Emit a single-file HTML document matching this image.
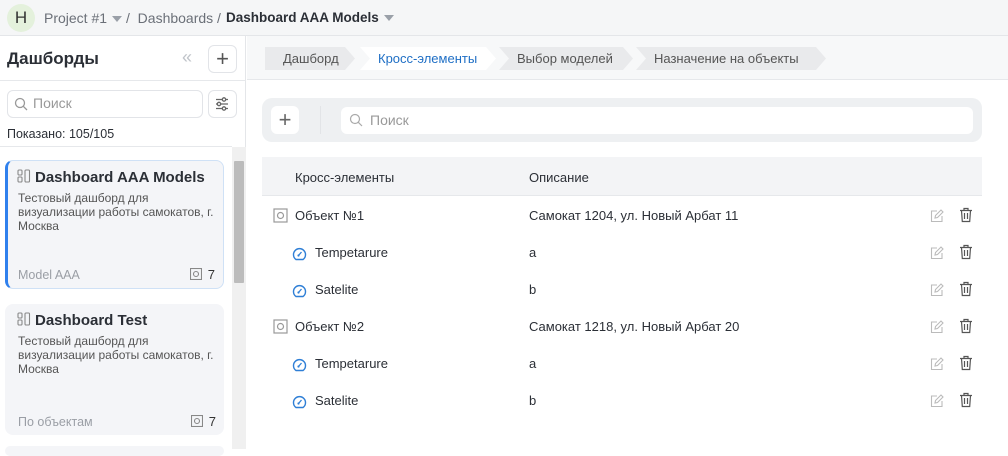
<!DOCTYPE html>
<html><head><meta charset="utf-8"><style>
*{box-sizing:border-box;margin:0;padding:0}
body{width:1008px;height:449px;overflow:hidden;font-family:"Liberation Sans","Noto Sans CJK SC",sans-serif;color:#2b2f36;background:#fff;position:relative;font-size:13px}
.abs{position:absolute}
.top{left:0;top:0;width:1008px;height:36px;background:#f5f6f7;border-bottom:1px solid #e4e6e9}
.av{left:7px;top:4px;width:28px;height:28px;border-radius:50%;background:#e4f1dc;text-align:center;line-height:28px;font-size:17px;color:#333}
.crumb{top:10px;font-size:14px;color:#6b7078}
.tri{display:inline-block;width:0;height:0;border-left:5px solid transparent;border-right:5px solid transparent;border-top:6px solid #9aa0a8;vertical-align:middle;margin-left:5px}
.left{left:0;top:36px;width:246px;height:413px;border-right:1px solid #e4e6e9;background:#fff}
.btn{background:#fff;border:1px solid #e2e4e8;border-radius:6px}
.card{left:5px;width:219px;border-radius:8px;background:#f4f5f8}
.card h3{position:absolute;left:9px;top:8px;font-size:15px;font-weight:bold;color:#2b2f36}
.card p{position:absolute;left:10px;top:30px;width:200px;font-size:12px;line-height:14px;color:#555}
.card .ft{position:absolute;left:10px;bottom:6px;font-size:12.5px;color:#9a9ea5}
.card .cnt{position:absolute;right:8px;bottom:6px;font-size:13px;color:#333}
.tab{top:47px;height:23px;line-height:23px;font-size:13px;color:#555;background:#e9eaec;clip-path:polygon(0 0,calc(100% - 10px) 0,100% 50%,calc(100% - 10px) 100%,0 100%,10px 50%);padding-left:18px}
.row{left:262px;width:720px;height:37px;font-size:13px;color:#2b2f36}
.row span{position:absolute;top:11px}
.ico{position:absolute;top:11px}
</style></head><body>
<div class="abs top"></div>
<div class="abs av">H</div>
<div class="abs crumb" style="left:44px">Project #1<span class="tri"></span></div>
<div class="abs crumb" style="left:126px">/&nbsp;&nbsp;Dashboards /</div>
<div class="abs crumb" style="left:226px;color:#2b2f36;font-weight:bold;font-size:13.5px">Dashboard AAA Models<span class="tri"></span></div>

<div class="abs left"></div>
<div class="abs" style="left:7px;top:49px;font-size:17px;font-weight:bold;color:#2b2f36">Дашборды</div>
<div class="abs" style="left:182px;top:47px;font-size:18px;color:#c0c4ca">«</div>
<div class="abs btn" style="left:208px;top:45px;width:29px;height:28px;text-align:center;line-height:25px;font-size:22px;color:#555">+</div>
<div class="abs" style="left:0;top:80px;width:246px;height:1px;background:#e6e8eb"></div>
<div class="abs btn" style="left:7px;top:90px;width:196px;height:28px"></div>
<svg class="abs" style="left:14px;top:97px" width="14" height="14"><circle cx="6" cy="6" r="4.5" fill="none" stroke="#999" stroke-width="1.3"/><path d="M9.3 9.3L13 13" stroke="#999" stroke-width="1.3"/></svg>
<div class="abs" style="left:33px;top:95px;font-size:14px;color:#999">Поиск</div>
<div class="abs btn" style="left:208px;top:90px;width:29px;height:28px"></div>
<svg class="abs" style="left:214px;top:96px" width="16" height="16" stroke="#666" stroke-width="1.3" fill="#fff"><path d="M2 3.5H14M2 8H14M2 12.5H14"/><circle cx="10" cy="3.5" r="1.7"/><circle cx="5" cy="8" r="1.7"/><circle cx="10" cy="12.5" r="1.7"/></svg>
<div class="abs" style="left:7px;top:127px;font-size:12.5px;color:#2b2f36">Показано: 105/105</div>
<div class="abs" style="left:0;top:146px;width:232px;height:1px;background:#e6e8eb"></div>
<div class="abs" style="left:232px;top:147px;width:14px;height:302px;background:#f0f0f0"></div>
<div class="abs" style="left:234px;top:161px;width:10px;height:122px;background:#bcbcbc;border-radius:1px"></div>

<div class="abs card" style="top:160px;height:129px;border:1px solid #cfe1f6;border-left:3px solid #2f80ed">
<h3><svg width="14" height="14" style="vertical-align:-1px;margin-right:4px" fill="none" stroke="#888" stroke-width="1.1"><rect x="1" y="1" width="4" height="5" rx="1"/><rect x="1" y="8" width="4" height="5" rx="1"/><rect x="8" y="1" width="4.5" height="12" rx="1"/></svg>Dashboard AAA Models</h3>
<p>Тестовый дашборд для визуализации работы самокатов, г. Москва</p>
<div class="ft">Model AAA</div><div class="cnt"><svg width="12" height="12" style="vertical-align:-1px;margin-right:6px" fill="none" stroke="#888" stroke-width="1.1"><rect x="0.5" y="0.5" width="11" height="11"/><circle cx="6" cy="6" r="2.5"/></svg>7</div></div>
<div class="abs card" style="top:304px;height:131px;border-left:3px solid transparent">
<h3><svg width="14" height="14" style="vertical-align:-1px;margin-right:4px" fill="none" stroke="#888" stroke-width="1.1"><rect x="1" y="1" width="4" height="5" rx="1"/><rect x="1" y="8" width="4" height="5" rx="1"/><rect x="8" y="1" width="4.5" height="12" rx="1"/></svg>Dashboard Test</h3>
<p>Тестовый дашборд для визуализации работы самокатов, г. Москва</p>
<div class="ft">По объектам</div><div class="cnt"><svg width="12" height="12" style="vertical-align:-1px;margin-right:6px" fill="none" stroke="#888" stroke-width="1.1"><rect x="0.5" y="0.5" width="11" height="11"/><circle cx="6" cy="6" r="2.5"/></svg>7</div></div>
<div class="abs card" style="top:446px;height:10px"></div>

<div class="abs" style="left:247px;top:36px;width:761px;height:44px;background:#f7f8f9;border-bottom:1px solid #e6e8eb"></div>
<div class="abs tab" style="left:265px;width:90px;clip-path:polygon(0 0,calc(100% - 10px) 0,100% 50%,calc(100% - 10px) 100%,0 100%)">Дашборд</div>
<div class="abs tab" style="left:360px;width:136px;background:#fff;color:#1f6fc5">Кросс-элементы</div>
<div class="abs tab" style="left:499px;width:134px">Выбор моделей</div>
<div class="abs tab" style="left:636px;width:190px">Назначение на объекты</div>

<div class="abs" style="left:262px;top:98px;width:720px;height:44px;background:#eef0f2;border-radius:10px"></div>
<div class="abs" style="left:271px;top:106px;width:28px;height:28px;background:#fff;border-radius:6px;text-align:center;line-height:28px;font-size:22px;color:#666">+</div>
<div class="abs" style="left:320px;top:106px;width:1px;height:28px;background:#e2e4e7"></div>
<div class="abs" style="left:341px;top:107px;width:632px;height:27px;background:#fff;border-radius:6px"></div>
<svg class="abs" style="left:349px;top:113px" width="14" height="14"><circle cx="6" cy="6" r="4.5" fill="none" stroke="#aaa" stroke-width="1.2"/><path d="M9.3 9.3L13 13" stroke="#aaa" stroke-width="1.2"/></svg>
<div class="abs" style="left:370px;top:112px;font-size:14px;color:#999">Поиск</div>

<div class="abs" style="left:262px;top:157px;width:720px;height:39px;background:#f3f4f6;border-bottom:1px solid #e6e8eb"></div>
<div class="abs" style="left:295px;top:170px;font-size:13px">Кросс-элементы</div>
<div class="abs" style="left:529px;top:170px;font-size:13px">Описание</div>

<div id="rows"></div>
<script>
var d=[["obj","Объект №1","Самокат 1204, ул. Новый Арбат 11"],["s","Tempetarure","a"],["s","Satelite","b"],["obj","Объект №2","Самокат 1218, ул. Новый Арбат 20"],["s","Tempetarure","a"],["s","Satelite","b"]];
var h="";
d.forEach(function(r,i){var y=197+i*37;var ic;
if(r[0]=="obj"){ic='<svg class="ico" style="left:11px" width="15" height="15"><rect x="1" y="1" width="13" height="13" fill="none" stroke="#999" stroke-width="1.2"/><circle cx="7.5" cy="7.5" r="3" fill="none" stroke="#999" stroke-width="1.2"/></svg>';var tx=33;}
else{ic='<svg class="ico" style="left:30px;top:12px" width="15" height="15"><path d="M4 13.5H11A6 6 0 1 0 4 13.5Z" fill="none" stroke="#2f7fd6" stroke-width="1.4" stroke-linejoin="round"/><path d="M6.5 9.5L9.5 6" stroke="#2f7fd6" stroke-width="1.3"/><circle cx="6.5" cy="9.5" r="1.1" fill="#2f7fd6"/></svg>';var tx=53;}
h+='<div class="abs row" style="top:'+y+'px">'+ic+'<span style="left:'+tx+'px">'+r[1]+'</span><span style="left:267px">'+r[2]+'</span>'+
'<svg class="ico" style="left:668px;top:12px" width="14" height="14" fill="none" stroke="#bbb" stroke-width="1.1"><path d="M7 2H1.5V12.5H12V7"/><path d="M5 9L5.5 6.5L11 1L13 3L7.5 8.5Z"/></svg>'+
'<svg class="ico" style="left:697px;top:10px" width="14" height="16" fill="none" stroke="#555" stroke-width="1.2"><path d="M1 3.5H13M5 3.5V1.5H9V3.5M2.5 3.5L3.3 14.5H10.7L11.5 3.5M5.5 6V12M8.5 6V12"/></svg></div>';});
document.getElementById("rows").innerHTML=h;
</script>
</body></html>
